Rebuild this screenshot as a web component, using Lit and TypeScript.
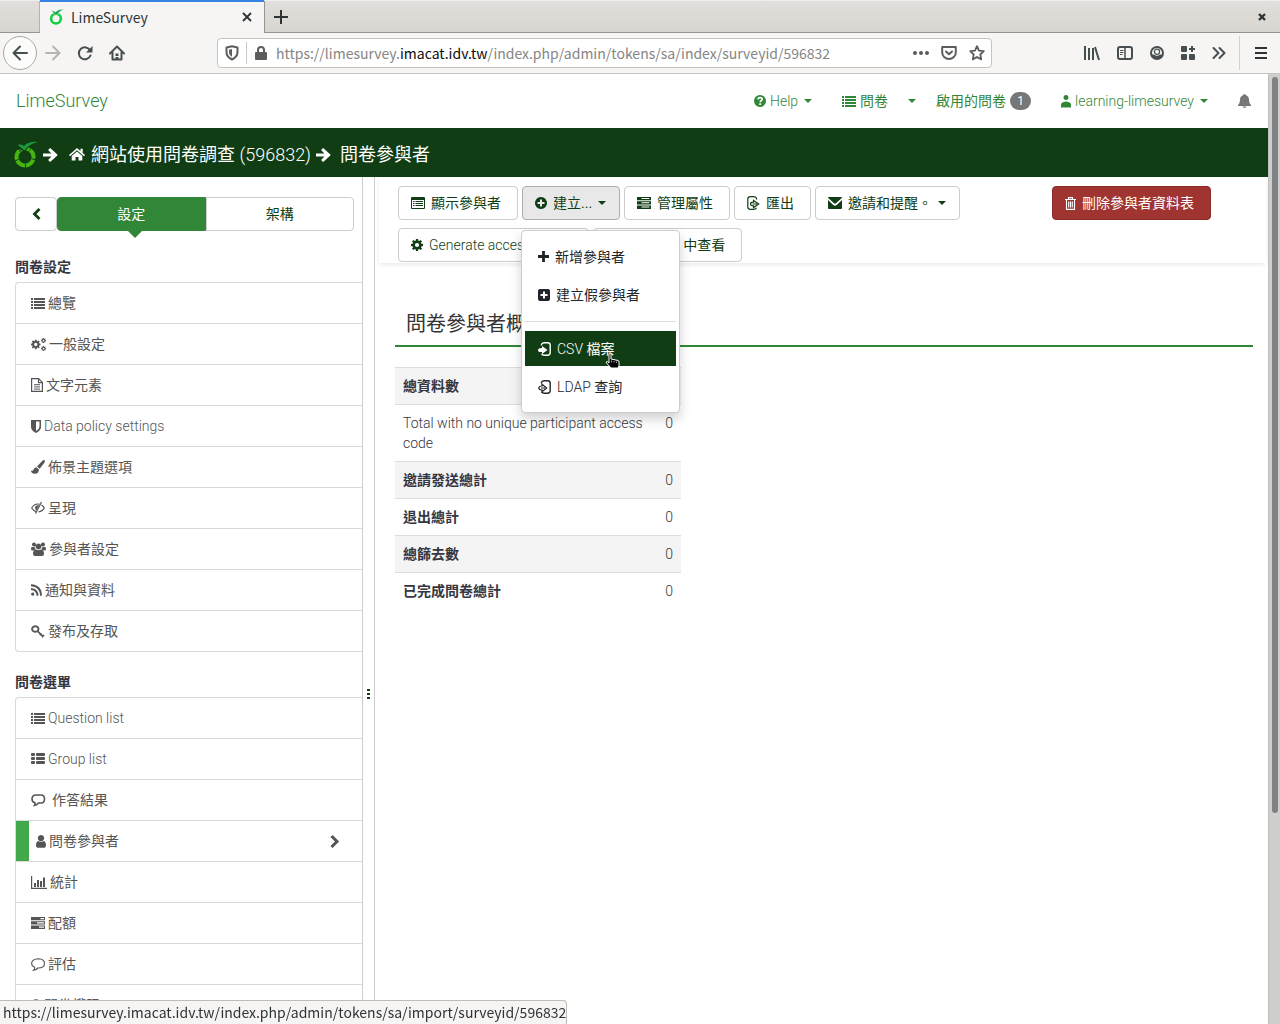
import { LitElement, html, svg, css, nothing } from "lit";
import { customElement, property } from "lit/decorators.js";
import { classMap } from "lit/directives/class-map.js";

const line = (d: string, w: number, extra = "") =>
  svg`<path d=${d} fill="none" stroke="currentColor" stroke-width=${w} stroke-linejoin=${extra || "miter"} stroke-linecap=${extra || "butt"}></path>`;
const fill = (d: string) => svg`<path d=${d} fill="currentColor" fill-rule="evenodd"></path>`;

const GEAR =
  "M5.8 0h2.4l.4 2 .9.4L11.2 1.2l1.6 1.6L11.6 4.500l.4.9 2 .4v2.400l-2 .4-.4.9 1.200 1.700-1.600 1.600-1.700-1.200-.9.4-.4 2H5.800l-.4-2-.9-.4-1.700 1.200-1.600-1.600L2.400 9.500 2 8.600l-2-.4V5.800l2-.4.4-.9L1.200 2.800l1.600-1.600 1.700 1.200.9-.4zM7 4.600a2.400 2.400 0 1 0 0 4.800 2.400 2.400 0 0 0 0-4.800z";
const BOX = "M3.500 3.500V2.300C4 1.300 5 .8 6.500.8h3c1.800 0 2.700.8 2.700 2.400v7.600c0 1.600-.9 2.400-2.700 2.400h-3c-1.500 0-2.500-.5-3-1.500";

interface Glyph {
  w: number;
  h: number;
  art: unknown;
}

const GLYPHS: Record<string, Glyph> = {
  back: { w: 16, h: 16, art: line("M15 8H2M8 1.500 1.500 8 8 14.500", 2, "round") },
  forward: { w: 16, h: 16, art: line("M1 8h13M8 1.500 14.500 8 8 14.500", 2, "round") },
  reload: {
    w: 16,
    h: 16,
    art: svg`${line("M13.200 5.500A6 6 0 1 0 13.500 10.500", 2, "round")}${fill("M15.500 1v6.500H9z")}`,
  },
  home: {
    w: 16,
    h: 16,
    art: svg`${line("M1 8.500 8 1.500l7 7", 2, "round")}${line("M3.500 7.500V14.500H12.500V7.500", 2, "round")}${fill("M6.500 8.500h3V11h-3zM6.500 12h3v3h-3z")}`,
  },
  tracking: {
    w: 14,
    h: 16,
    art: svg`${line("M7 1.300 12.500 2.500V7c0 3.800-2.200 6-5.500 7.500C3.700 13 1.500 10.800 1.500 7V2.500z", 2, "round")}${fill("M7 4v8C5 10.500 4 9 4 7V4.700z")}`,
  },
  lock: {
    w: 12,
    h: 14,
    art: svg`${line("M3 7V4a3 3 0 0 1 6 0v3", 2)}${fill("M1 6h10q1 0 1 1v6q0 1-1 1H1q-1 0-1-1V7q0-1 1-1z")}`,
  },
  dots: { w: 16, h: 4, art: fill("M2 0a2 2 0 1 0 .01 0zM8 0a2 2 0 1 0 .01 0zM14 0a2 2 0 1 0 .01 0z") },
  pocket: {
    w: 16,
    h: 14,
    art: svg`${line("M1.200 1h13.600v5.500a6.800 6.500 0 0 1-13.600 0z", 2, "round")}${line("M5 5.500 8 8.300l3-2.800", 2, "round")}`,
  },
  star: {
    w: 16,
    h: 16,
    art: line("M8 1.200l2 4.400 4.800.6-3.500 3.300.9 4.900L8 12l-4.200 2.400.9-4.900L1.200 6.200l4.800-.6z", 1.800, "round"),
  },
  library: { w: 16, h: 14, art: line("M1 0v14M5 2v12M9 2v12M11 1l4 13", 2) },
  sidebar: {
    w: 16,
    h: 14,
    art: svg`<rect x="1" y="1" width="14" height="12" rx="2" fill="none" stroke="currentColor" stroke-width="2"></rect>${line("M8 1v12", 1.5)}${line("M3 4.500h3.500M3 6.500h3.500M3 8.500h2.500", 1)}`,
  },
  account: {
    w: 14,
    h: 14,
    art: svg`<circle cx="7" cy="7" r="6" fill="none" stroke="currentColor" stroke-width="2"></circle><circle cx="7" cy="5.800" r="2.600" fill="none" stroke="currentColor" stroke-width="1.200"></circle>${fill("M1.500 8.500H4Q7 11 10 8.500h2.500Q11 13 7 13T1.500 8.500z")}`,
  },
  grid: {
    w: 14,
    h: 14,
    art: svg`<rect width="6" height="6" rx="1" fill="currentColor"></rect><rect y="8" width="6" height="6" rx="1" fill="currentColor"></rect><rect x="8" y="8" width="6" height="6" rx="1" fill="currentColor"></rect>${line("M11 0v6M8 3h6", 2)}`,
  },
  more: { w: 14, h: 12, art: line("M1.500 1l5 5-5 5M7.500 1l5 5-5 5", 2, "round") },
  menu: { w: 12, h: 12, art: line("M0 1h12M0 6h12M0 11h12", 2) },
  close: { w: 10, h: 10, art: line("M1 1l8 8M9 1l-8 8", 1.800) },
  closewin: { w: 8, h: 8, art: line("M1 1l6 6M7 1 1 7", 2.4) },
  plus: { w: 14, h: 14, art: line("M7 0v14M0 7h14", 2) },
  caret: { w: 8, h: 4, art: fill("M0 0h8L4 4z") },
  help: {
    w: 12,
    h: 12,
    art: svg`<circle cx="6" cy="6" r="6" fill="currentColor"></circle><path d="M4 4.600C4 1.800 8.200 2 8.200 4.300 8.200 5.700 6.200 5.600 6.200 7.300" fill="none" stroke="#fff" stroke-width="1.700"></path><rect x="5.200" y="8.300" width="1.900" height="1.700" fill="#fff"></rect>`,
  },
  list: {
    w: 14,
    h: 12,
    art: fill("M0 1h2v2H0zM0 4h2v2H0zM0 7h2v2H0zM0 10h2v2H0zM3 1h11v2H3zM3 4h11v2H3zM3 7h11v2H3zM3 10h11v2H3z"),
  },
  thlist: {
    w: 14,
    h: 12,
    art: fill("M1 0h2q1 0 1 1v1q0 1-1 1H1Q0 3 0 2V1q0-1 1-1zM6 0h7q1 0 1 1v1q0 1-1 1H6Q5 3 5 2V1q0-1 1-1zM1 4h2q1 0 1 1v1q0 1-1 1H1Q0 7 0 6V5q0-1 1-1zM6 4h7q1 0 1 1v1q0 1-1 1H6Q5 7 5 6V5q0-1 1-1zM1 8h2q1 0 1 1v1q0 1-1 1H1q-1 0-1-1V9q0-1 1-1zM6 8h7q1 0 1 1v1q0 1-1 1H6q-1 0-1-1V9q0-1 1-1z"),
  },
  person: { w: 10, h: 13, art: fill("M5 0a2.500 2.500 0 1 1-.01 0zM0 12.500V9.500Q0 7.500 2.500 7Q5 6 7.500 7 10 7.500 10 9.500v3z") },
  user: { w: 10, h: 13, art: fill("M5 0a3.200 3.200 0 1 1-.01 0zM2.200 6q2.800 2 5.600 0Q10 6.500 10 10.500q0 2-1.500 2.300h-7Q0 12.500 0 10.500 0 6.500 2.200 6z") },
  bell: { w: 13, h: 14, art: fill("M6.500 0q1 0 1 1.100Q11 2 11 6q0 3.500 2 5v1H0v-1q2-1.500 2-5 0-4 3.500-4.900Q5.500 0 6.500 0zM4.500 12.600h4Q8 14 6.500 14t-2-1.400z") },
  arrow: { w: 15, h: 14, art: fill("M0 5.500h8.500L5.500 2.500Q5 2 5.600 1.400L6.500.5q.7-.6 1.300 0l6.500 6q.5.5 0 1l-6.500 6q-.6.6-1.300 0l-.9-.9q-.6-.6-.1-1.100l3-3H0z") },
  house: {
    w: 16,
    h: 13,
    art: fill("M8 0 16 7l-1 1.200-7-6-7 6L0 7l3-2.600zM11.500.8h2.200v4L11.500 3zM8 3.600l5.300 4.500V12.500H9.500V9h-3v3.500H2.700V8.100z"),
  },
  left: { w: 9, h: 12, art: line("M7.500 1 2.500 6l5 5", 2.800) },
  right: { w: 9, h: 13, art: line("M1.500 1 7 6.500l-5.500 5.500", 3) },
  cogs: {
    w: 15,
    h: 13,
    art: svg`<g transform="translate(0 1.700) scale(.68)">${fill(GEAR)}</g><g transform="translate(10 0) scale(.36)">${fill(GEAR)}</g><g transform="translate(10 8) scale(.36)">${fill(GEAR)}</g>`,
  },
  cog: { w: 12, h: 12, art: svg`<g transform="scale(.86)">${fill(GEAR)}</g>` },
  file: { w: 12, h: 14, art: svg`${line("M.6.6h7l3.800 3.800v9H.6zM7.500.6v4h4", 1.200)}${line("M3 6.700h6M3 8.900h6M3 11.100h6", 1)}` },
  shield: { w: 10, h: 13, art: fill("M0 0h10v7q0 3.500-5 6-5-2.500-5-6zM5 1.600v9.500q3.500-2 3.500-4.300V1.600z") },
  brush: { w: 14, h: 14, art: fill("M13.500.3q1 .8 0 2.300L8.700 8.800 6 6.500 11.500.700q1.200-1 2-.4zM5.300 7.200 7.900 9.500Q8 13.700 3.700 13.700 0 13.600 0 10.500q1 .7 2 0Q3 7.500 5.300 7.200z") },
  eye: {
    w: 14,
    h: 12,
    art: svg`${line("M5.500 9.800Q2.500 9 .7 6 3 2 7 2q1 0 1.500.2M10.500 3Q12.300 4 13.300 6q-2 3.500-5.800 4", 1.200)}${line("M10.500 0 4.500 11.500", 1.200)}${fill("M4 5.500Q4.500 3 8 3L5.500 8.300Q4 7.500 4 5.500z")}`,
  },
  group: {
    w: 15,
    h: 14,
    art: fill("M3 .5a2 2 0 1 1-.01 0zM12 .5a2 2 0 1 1-.01 0zM7.500 1.500a3 3 0 1 1-.01 0zM1 5h2.500q.3 1.500 1.200 2.300Q3.500 7.500 3 8.500H1.500Q0 8.500 0 7q0-2 1-2zM11.500 5H14q1 0 1 2 0 1.500-1.500 1.500H12q-.5-1-1.700-1.200Q11.200 6.500 11.500 5zM4.800 7.500q2.700 1.500 5.400 0Q13 8 13 12q0 2-2 2H4q-2 0-2-2 0-4 2.800-4.500z"),
  },
  rss: {
    w: 11,
    h: 12,
    art: svg`${fill("M1.700 8.500a1.600 1.600 0 1 1-.01 0z")}${line("M0 5q6.500.500 6.500 6.800M0 1.200q10 .500 10 10.600", 1.900)}`,
  },
  key: { w: 14, h: 13, art: svg`${line("M4.300 1.200a3.200 2.800 0 1 1-.01 0z", 1.900)}${line("M6.500 6.200 12.200 11.500M8.800 10.200l1.700-1.700M11 12.200l2-2.200", 1.700)}` },
  comment: { w: 18, h: 13, art: line("M5 1h5q3.500 0 3.500 4T10 9H7.500Q6 11 3.500 11.500 4.300 10 4 8.700 1 8 1 5q0-4 4-4z", 1.600) },
  chart: { w: 16, h: 13, art: fill("M0 0h1.200v11.800H16V13H0zM3 7h2v4H3zM6 4h2v7H6zM9 5h2v6H9zM12 1.500h2V11h-2z") },
  tasks: { w: 14, h: 12, art: fill("M0 0h14v3.300H0zM9.500 1h3.500v1.200H9.500zM0 4.300h14v3.300H0zM6 5.300h7v1.200H6zM0 8.600h14v3.300H0zM8 9.600h5v1.200H8z") },
  server: { w: 14, h: 12, art: fill("M0 0h14v3.300H0zM4.500 1h7.800v1H4.500zM0 4.300h14v3.300H0zM4.500 5.300h7.800v1H4.500zM0 8.600h14v3.300H0zM4.500 9.600h7.800v1H4.500z") },
  bubble: { w: 14, h: 13, art: line("M7.500.7q6 .3 6 4.700t-6.500 4.600q-2.200 2-4.500 2.100 1.500-1.200 1.200-2.800Q.6 8 .6 5.500.8 1 7.500.7z", 1.100) },
  lockline: { w: 10, h: 13, art: line("M2 6V4a3 3 0 0 1 6 0v2M1 6h8v6H1z", 1.600) },
  table: { w: 14, h: 12, art: fill("M1 0h12q1 0 1 1v10q0 1-1 1H1q-1 0-1-1V1q0-1 1-1zM1 3v8h12V3zM2 4h1.500v1H2zM4.500 4H12v1H4.500zM2 6h1.500v1H2zM4.500 6H12v1H4.500zM2 8h1.500v1H2zM4.500 8H12v1H4.500z") },
  pluscircle: { w: 12, h: 12, art: fill("M6 0a6 6 0 1 1-.01 0zM5 2.500V5H2.500v2H5v2.500h2V7h2.500V5H7V2.500z") },
  plusbold: { w: 11, h: 11, art: line("M5.500 0v11M0 5.500h11", 2.800) },
  plussquare: { w: 12, h: 12, art: fill("M2 0h8q2 0 2 2v8q0 2-2 2H2q-2 0-2-2V2Q0 0 2 0zM5 2.500V5H2.500v2H5v2.500h2V7h2.500V5H7V2.500z") },
  import: { w: 13, h: 14, art: svg`${line(BOX, 1.400)}${fill("M0 8Q0 6 4 6V4L9.500 8 4 12v-2Q0 10.500 0 8z")}` },
  ldap: { w: 13, h: 14, art: svg`${line(BOX, 1.400)}${line("M.7 8Q1 6 4 6V4.300L8.700 8 4 11.700V10Q1 10 .7 8zM3 8h4", 1.200)}` },
  export: { w: 13, h: 14, art: svg`${line("M9.500 3.500V2.200C9 1 8 .7 6.500.7h-3C1.600.7.8 1.500.8 3v8c0 1.600.8 2.300 2.700 2.300h3c1.500 0 2.500-.4 3-1.600", 1.200)}${line("M3.500 8Q3.500 6.200 6.500 6.200V4.500L11.700 8 6.500 11.500V9.800Q3.500 9.800 3.500 8zM5.500 8H10", 1.200)}` },
  mail: { w: 14, h: 12, art: fill("M.8 0h12.400q.8 0 .8.800L8 6.300q-1 .7-2 0L0 .8Q0 0 .8 0zM0 3l5.300 5q1.700 1.300 3.400 0L14 3v8q0 1-1 1H1q-1 0-1-1z") },
  trash: { w: 11, h: 13, art: line("M0 2.500h11M3.500 2.500V.6h4v1.900M1.500 2.500v9.900h8V2.500M3.700 4.500v6M5.500 4.500v6M7.300 4.500v6", 1.100) },
  grip: { w: 3, h: 10, art: fill("M0 0h3v2H0zM0 4h3v2H0zM0 8h3v2H0z") },
  lime: {
    w: 24,
    h: 27,
    art: svg`<circle cx="11" cy="16" r="8.500" fill="none" stroke="#46b50f" stroke-width="4" stroke-dasharray="9.800 0.880" transform="rotate(-55 11 16)"></circle><path d="M3 5 10.500 9 Q15 2 24 1 15 0 10.500 5.500 7 3 3 5z" fill="#103d13" stroke="#103d13" stroke-width="3"></path><path d="M3.500 3.800 10.500 9.500Q15 2.500 24.500 1 15 0 10 5 7 3 3.500 3.800z" fill="#1d9a3f"></path>`,
  },
  favicon: {
    w: 15,
    h: 16,
    art: svg`<circle cx="7" cy="9.600" r="4.900" fill="none" stroke="#14d041" stroke-width="2.600"></circle><path d="M2.500 1.800 7 6.500Q10 2.500 15 0 9 0 6.500 3 4.500 1.500 2.500 1.800z" fill="#0fa047" stroke="#f6f5f4" stroke-width=".6"></path>`,
  },
  hand: {
    w: 15,
    h: 17,
    art: svg`<path d="M4 2q0-1 1-1t1 1v5l7 1.500q1 .3 1 1.500v4l-1 2H6L1.500 11Q.7 9.500 2.300 9.500L4 11z" fill="#000" stroke="#fff" stroke-width="1"></path><path d="M6.500 8.500v2M9 9v1.500M11.500 9.500V11" stroke="#fff" stroke-width=".6"></path>`,
  },
};

const icon = (name: string) => {
  const g = GLYPHS[name];
  return html`<svg class="icon" width=${g.w} height=${g.h} viewBox="0 0 ${g.w} ${g.h}" aria-hidden="true">${g.art}</svg>`;
};

// Latin runs use the light face; Chinese runs stay at regular weight.
const words = (text: string) =>
  html`<span class="words"
    >${text
      .split(/([A-Za-z0-9()-][A-Za-z0-9() -]*)/)
      .filter(Boolean)
      .map((run) => (/^[A-Za-z0-9(]/.test(run) ? html`<span class="latin">${run}</span>` : run))}</span
  >`;

const base = css`
  * {
    box-sizing: border-box;
  }
  .icon {
    flex: none;
    display: block;
    overflow: visible;
  }
  .latin {
    font-weight: 300;
  }
  .words {
    white-space: pre-wrap;
  }
  button {
    font: inherit;
    color: inherit;
    background: none;
    border: 0;
    padding: 0;
    margin: 0;
  }
  a {
    color: inherit;
    text-decoration: none;
  }
`;

@customElement("browser-chrome")
export class BrowserChrome extends LitElement {
  static styles = [
    base,
    css`
      :host {
        display: block;
        flex: none;
        font: 14px/20px "Noto Sans CJK TC", "Noto Sans", sans-serif;
        color: #2e3436;
      }
      .tabs {
        display: flex;
        height: 33px;
        background: linear-gradient(#e1dedb, #d9d5d0);
        border-top: 1px solid #f0efee;
      }
      .lead,
      .rest {
        border-bottom: 1px solid #929593;
      }
      .lead {
        width: 40px;
        border-right: 1px solid #b6b3af;
      }
      .rest {
        flex: 1;
        display: flex;
        align-items: center;
        justify-content: space-between;
        padding: 0 14px 0 9px;
        border-left: 1px solid #929593;
      }
      .tab {
        display: flex;
        align-items: center;
        width: 224px;
        margin-top: -1px;
        padding: 0 12px 2px 9px;
        background: #f6f5f4;
        border-top: 2px solid #3584e4;
      }
      .title {
        flex: 1;
        padding-left: 7px;
      }
      .bar {
        display: flex;
        align-items: center;
        height: 41px;
        padding: 0 13px 0 3px;
        background: #f6f5f4;
        border-bottom: 1px solid #c6c3c0;
      }
      .nav {
        display: flex;
        align-items: center;
        gap: 16px;
        width: 214px;
        color: #474e50;
      }
      .round {
        display: grid;
        place-items: center;
        width: 34px;
        height: 34px;
        margin-right: -8px;
        border: 1px solid #aaa8a5;
        border-radius: 50%;
        background: #fcfcfb;
      }
      .off {
        color: #b4b4b2;
      }
      .url {
        flex: 1;
        display: flex;
        align-items: center;
        height: 30px;
        padding: 0 6px 0 7px;
        color: #5d5d5d;
        background: #fff;
        border: 1px solid #c9c3be;
        border-radius: 4px;
      }
      .sep {
        width: 1px;
        height: 22px;
        margin: 0 8px 0 7px;
        background: #cdc7c2;
      }
      .address {
        flex: 1;
        padding-left: 9px;
        color: #858585;
        white-space: nowrap;
        overflow: hidden;
        outline: none;
      }
      .domain {
        color: #0c0c0d;
      }
      .acts {
        display: flex;
        align-items: center;
        gap: 12px;
      }
      .tools {
        display: flex;
        align-items: center;
        gap: 17px;
        padding: 0 13px 0 92px;
        color: #474e50;
      }
      .menu {
        display: flex;
        align-items: center;
        height: 34px;
        padding: 0 0 0 15px;
        border-left: 1px solid #d3d0cd;
      }
    `,
  ];

  render() {
    return html`
      <div class="tabs">
        <div class="lead"></div>
        <div class="tab">
          ${icon("favicon")}<span class="title">LimeSurvey</span>
          <button aria-label="Close tab">${icon("close")}</button>
        </div>
        <div class="rest">
          <button aria-label="New tab">${icon("plus")}</button>
          <button aria-label="Close window">${icon("closewin")}</button>
        </div>
      </div>
      <div class="bar">
        <div class="nav">
          <button class="round" aria-label="Back">${icon("back")}</button>
          <button class="off" aria-label="Forward">${icon("forward")}</button>
          <button aria-label="Reload">${icon("reload")}</button>
          <button aria-label="Home">${icon("home")}</button>
        </div>
        <div class="url">
          ${icon("tracking")}<span class="sep"></span>${icon("lock")}
          <div class="address" role="textbox" aria-label="Address" contenteditable="true" spellcheck="false"
            >https://limesurvey.<span class="domain">imacat.idv.tw</span>/index.php/admin/tokens/sa/index/surveyid/596832</div
          >
          <div class="acts">
            <button aria-label="Page actions">${icon("dots")}</button>
            <button aria-label="Save to Pocket">${icon("pocket")}</button>
            <button aria-label="Bookmark">${icon("star")}</button>
          </div>
        </div>
        <div class="tools">
          <button aria-label="Library">${icon("library")}</button>
          <button aria-label="Sidebars">${icon("sidebar")}</button>
          <button aria-label="Account">${icon("account")}</button>
          <button aria-label="Extensions">${icon("grid")}</button>
          <button aria-label="More tools">${icon("more")}</button>
        </div>
        <div class="menu"><button aria-label="Menu">${icon("menu")}</button></div>
      </div>
    `;
  }
}

@customElement("site-header")
export class SiteHeader extends LitElement {
  static styles = [
    base,
    css`
      :host {
        display: block;
        flex: none;
      }
      .nav {
        display: flex;
        align-items: center;
        height: 54px;
        padding: 0 17px 0 16px;
        color: #328637;
        background: #fff;
      }
      .brand {
        flex: 1;
        font-size: 18px;
      }
      .item {
        display: flex;
        align-items: center;
        gap: 4px;
      }
      .links {
        display: flex;
        align-items: center;
        gap: 30px;
      }
      .pair {
        display: flex;
        align-items: center;
        gap: 20px;
      }
      .caret {
        margin-left: 2px;
      }
      .count {
        width: 21px;
        border-radius: 9px;
        background: #777;
        color: #fff;
        font-size: 12px;
        line-height: 18px;
        text-align: center;
      }
      .bell {
        color: #777;
      }
      .crumbs {
        display: flex;
        align-items: center;
        height: 49px;
        padding: 4px 14px 0;
        font-size: 18px;
        color: #fff;
        background: #103d13;
      }
      .crumbs > * {
        margin-right: 5px;
      }
      .crumb {
        display: flex;
        align-items: center;
        gap: 6px;
        padding-left: 6px;
      }
      .crumb:last-child {
        padding-left: 4px;
      }
    `,
  ];

  render() {
    return html`
      <nav class="nav">
        <a class="brand" href="#">${words("LimeSurvey")}</a>
        <div class="links">
          <a class="item" href="#">${icon("help")}${words("Help")}<span class="caret">${icon("caret")}</span></a>
          <div class="pair">
            <a class="item" href="#">${icon("list")}${words("問卷")}</a>
            <button class="item" aria-label="問卷">${icon("caret")}</button>
            <a class="item" href="#">${words("啟用的問卷")}<span class="count">1</span></a>
          </div>
          <a class="item" href="#"
            >${icon("person")}${words("learning-limesurvey")}<span class="caret">${icon("caret")}</span></a
          >
          <button class="bell" aria-label="Notifications">${icon("bell")}</button>
        </div>
      </nav>
      <div class="crumbs">
        ${icon("lime")}${icon("arrow")}
        <a class="crumb" href="#">${icon("house")}${words("網站使用問卷調查 (596832)")}</a>
        ${icon("arrow")}
        <a class="crumb" href="#">${words("問卷參與者")}</a>
      </div>
    `;
  }
}

type Entry = [glyph: string, label: string, active?: boolean];

const SETTINGS: Entry[] = [
  ["list", "總覽"],
  ["cogs", "一般設定"],
  ["file", "文字元素"],
  ["shield", "Data policy settings"],
  ["brush", "佈景主題選項"],
  ["eye", "呈現"],
  ["group", "參與者設定"],
  ["rss", "通知與資料"],
  ["key", "發布及存取"],
];

const MENU: Entry[] = [
  ["list", "Question list"],
  ["thlist", "Group list"],
  ["comment", "作答結果"],
  ["user", "問卷參與者", true],
  ["chart", "統計"],
  ["tasks", "配額"],
  ["bubble", "評估"],
  ["lockline", "問卷權限"],
];

@customElement("side-menu")
export class SideMenu extends LitElement {
  static styles = [
    base,
    css`
      :host {
        display: flex;
        flex: none;
        width: 375px;
        overflow: hidden;
        border-right: 1px solid #ccc;
      }
      .panel {
        flex: 1;
        padding: 20px 0 0 15px;
        border-right: 1px solid #ccc;
      }
      .switch {
        display: flex;
        height: 34px;
        margin: 0 8px 22px 0;
        color: #103d13;
      }
      .back {
        display: grid;
        place-items: center;
        width: 42px;
        border: 1px solid #ccc;
        border-radius: 4px;
      }
      .tab {
        flex: 1;
        border: 1px solid #ccc;
        border-radius: 0 4px 4px 0;
      }
      .tab.on {
        position: relative;
        color: #fff;
        background: #328637;
        border-color: #328637;
        border-radius: 4px 0 0 4px;
      }
      .tab.on::after {
        content: "";
        position: absolute;
        top: 100%;
        left: 50%;
        margin-left: -4px;
        border: 8px solid transparent;
        border-bottom: 0;
        border-top-color: #328637;
      }
      .heading {
        margin: 0;
        padding-bottom: 1px;
        font-size: 14px;
        line-height: 28px;
        font-weight: 700;
        color: #35363f;
      }
      .list {
        list-style: none;
        margin: 0 0 16px;
        padding: 0;
        border: 1px solid #d9d9d9;
        border-right: 0;
        border-radius: 4px 0 0 4px;
      }
      .entry {
        display: flex;
        align-items: center;
        gap: 3px;
        height: 40px;
        padding: 0 23px 0 15px;
        color: #555;
      }
      li + li {
        border-top: 1px solid #d9d9d9;
      }
      .entry .words {
        flex: 1;
      }
      .active {
        padding-left: 7px;
        border-left: 13px solid #42a94a;
      }
      .drag {
        display: grid;
        place-items: center;
        width: 11px;
        padding-top: 186px;
        color: #103d13;
      }
    `,
  ];

  private list(title: string, entries: Entry[]) {
    return html`
      <h2 class="heading">${title}</h2>
      <ul class="list">
        ${entries.map(
          ([glyph, label, active]) => html`<li>
            <a class=${classMap({ entry: true, active: !!active })} href="#">
              ${icon(glyph)}${words(label)}${active ? icon("right") : nothing}
            </a>
          </li>`
        )}
      </ul>
    `;
  }

  render() {
    return html`
      <div class="panel">
        <div class="switch">
          <button class="back" aria-label="Collapse">${icon("left")}</button>
          <button class="tab on">${words("設定")}</button>
          <button class="tab">${words("架構")}</button>
        </div>
        ${this.list("問卷設定", SETTINGS)} ${this.list("問卷選單", MENU)}
      </div>
      <div class="drag">${icon("grip")}</div>
    `;
  }
}

@customElement("tool-button")
export class ToolButton extends LitElement {
  @property() glyph = "";
  @property() label = "";
  @property({ type: Boolean }) drop = false;
  @property({ type: Boolean }) pressed = false;
  @property({ type: Boolean }) danger = false;

  static styles = [
    base,
    css`
      :host {
        display: block;
      }
      .btn {
        display: flex;
        align-items: center;
        gap: 6px;
        height: 34px;
        padding: 0 16px 0 12px;
        color: #103d13;
        white-space: nowrap;
        background: #fff;
        border: 1px solid #ccc;
        border-radius: 4px;
      }
      .words {
        white-space: pre;
      }
      .drop {
        padding-right: 13px;
      }
      .pressed {
        background: #e8e8e8;
        border-color: #adadad;
      }
      .danger {
        color: #fff;
        background: #9f3430;
        border-color: #8b2a27;
      }
    `,
  ];

  render() {
    const { drop, pressed, danger } = this;
    return html`<button class=${classMap({ btn: true, drop, pressed, danger })}>
      ${icon(this.glyph)}${words(this.label)}${drop ? icon("caret") : nothing}
    </button>`;
  }
}

const TOTALS: [string, boolean][] = [
  ["總資料數", true],
  ["Total with no unique participant access code", false],
  ["邀請發送總計", true],
  ["退出總計", true],
  ["總篩去數", true],
  ["已完成問卷總計", true],
];

@customElement("participants-page")
export class ParticipantsPage extends LitElement {
  static styles = [
    base,
    css`
      :host {
        display: block;
        flex: 1;
        min-width: 0;
        padding: 0 2px 0 4px;
      }
      .toolbar {
        display: flex;
        justify-content: space-between;
        align-items: flex-start;
        padding: 9px 55px 1px 19px;
        box-shadow: 0 2px 4px rgba(0, 0, 0, 0.08);
      }
      .rows {
        display: grid;
        gap: 8px;
      }
      .row {
        display: flex;
        gap: 4px;
      }
      .anchor {
        position: relative;
      }
      .menu {
        position: absolute;
        z-index: 2;
        top: 44px;
        left: -1px;
        width: 159px;
        margin: 0;
        padding: 8px 3px 5px;
        list-style: none;
        color: #212529;
        background: #fff;
        border: 1px solid #ccc;
        border-radius: 4px;
        box-shadow: 0 6px 12px rgba(0, 0, 0, 0.18);
      }
      .choice {
        display: flex;
        align-items: center;
        gap: 6px;
        height: 35px;
        margin-bottom: 3px;
        padding-left: 13px;
      }
      .hot {
        color: #fff;
        background: #103d13;
      }
      .rule {
        height: 1px;
        margin: 9px 0;
        background: #ddd;
      }
      .cursor {
        position: absolute;
        left: 83px;
        top: 121px;
      }
      .body {
        padding: 46px 13px 0 16px;
      }
      .title {
        margin: 0;
        padding: 0 11px 6px;
        font-size: 20px;
        font-weight: 400;
        line-height: 30px;
        color: #333;
        border-bottom: 2px solid #328637;
      }
      .totals {
        width: 286px;
        margin-top: 20px;
        border-collapse: collapse;
        color: #35363f;
      }
      tr:nth-child(odd) {
        background: #f4f4f4;
      }
      th,
      td {
        padding: 8px;
        line-height: 20px;
        font-weight: 700;
        text-align: left;
        vertical-align: top;
        border-top: 1px solid #ddd;
      }
      .plain {
        font-weight: 300;
      }
      td {
        text-align: right;
        font-weight: 300;
      }
    `,
  ];

  render() {
    return html`
      <div class="toolbar">
        <div class="rows">
          <div class="row">
            <tool-button glyph="table" label="顯示參與者"></tool-button>
            <div class="anchor">
              <tool-button glyph="pluscircle" label="建立..." drop pressed></tool-button>
              <ul class="menu">
                <li><a class="choice" href="#">${icon("plusbold")}${words("新增參與者")}</a></li>
                <li><a class="choice" href="#">${icon("plussquare")}${words("建立假參與者")}</a></li>
                <li class="rule"></li>
                <li><a class="choice hot" href="#">${icon("import")}${words("CSV 檔案")}</a></li>
                <li><a class="choice" href="#">${icon("ldap")}${words("LDAP 查詢")}</a></li>
                <li class="cursor" aria-hidden="true">${icon("hand")}</li>
              </ul>
            </div>
            <tool-button glyph="server" label="管理屬性"></tool-button>
            <tool-button glyph="export" label="匯出"></tool-button>
            <tool-button glyph="mail" label="邀請和提醒。" drop></tool-button>
          </div>
          <div class="row">
            <tool-button glyph="cog" label="Generate access codes"></tool-button>
            <tool-button glyph="group" label="在 CPDB 中查看"></tool-button>
          </div>
        </div>
        <tool-button glyph="trash" label="刪除參與者資料表" danger></tool-button>
      </div>
      <div class="body">
        <h1 class="title">問卷參與者概要</h1>
        <table class="totals">
          <tbody>
            ${TOTALS.map(
              ([label, strong]) => html`<tr>
                <th scope="row" class=${strong ? "" : "plain"}>${label}</th>
                <td>0</td>
              </tr>`
            )}
          </tbody>
        </table>
      </div>
    `;
  }
}

@customElement("app-root")
export class AppRoot extends LitElement {
  static styles = [
    base,
    css`
      :host {
        display: flex;
        flex-direction: column;
        height: 100vh;
        overflow: hidden;
        background: #fff;
        color: #333;
        font: 14px/20px Roboto, "Noto Sans CJK TC", sans-serif;
      }
      .view {
        display: flex;
        flex: 1;
        min-height: 0;
      }
      .page {
        flex: 1;
        min-width: 0;
        display: flex;
        flex-direction: column;
      }
      .work {
        flex: 1;
        display: flex;
        min-height: 0;
      }
      .scroll {
        width: 12px;
        padding: 3px;
        background: #cecfcd;
        border-left: 1px solid #c0bfbd;
      }
      .thumb {
        width: 6px;
        height: 78%;
        border-radius: 3px;
        background: #7e8283;
      }
      .status {
        position: fixed;
        left: 0;
        bottom: 0;
        padding: 0 0 1px 3px;
        font: 14px/22px "Noto Sans CJK TC", "Noto Sans", sans-serif;
        color: #2e3436;
        background: #f6f5f4;
        border: 1px solid #c0bbb6;
        border-width: 1px 1px 0 0;
        border-radius: 0 4px 0 0;
      }
    `,
  ];

  render() {
    return html`
      <browser-chrome></browser-chrome>
      <div class="view">
        <div class="page">
          <site-header></site-header>
          <div class="work">
            <side-menu></side-menu>
            <participants-page></participants-page>
          </div>
        </div>
        <div class="scroll"><div class="thumb"></div></div>
      </div>
      <div class="status">https://limesurvey.imacat.idv.tw/index.php/admin/tokens/sa/import/surveyid/596832</div>
    `;
  }
}
